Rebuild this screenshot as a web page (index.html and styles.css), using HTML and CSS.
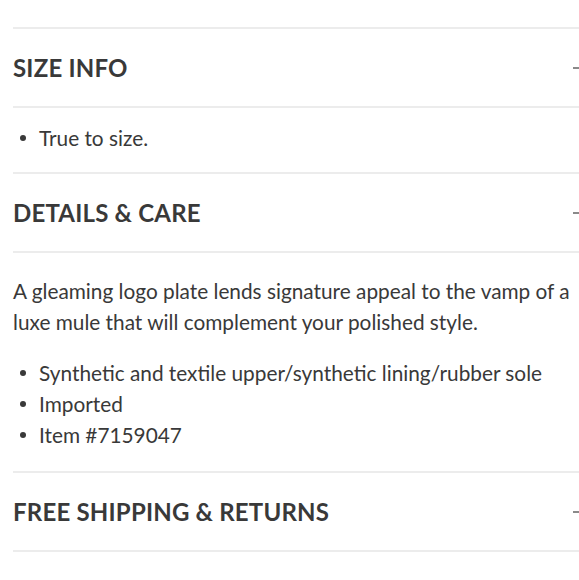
FILE: index.html
```html
<!DOCTYPE html>
<html lang="en">
<head>
<meta charset="utf-8">
<title>Product details</title>
<link rel="stylesheet" href="styles.css">
</head>
<body>
<div class="accordion">
  <section class="panel">
    <div class="panel-head">
      <h2 class="panel-title">SIZE INFO</h2>
      <span class="toggle"></span>
    </div>
    <div class="panel-body body-size">
      <ul class="bullets">
        <li>True to size.</li>
      </ul>
    </div>
  </section>
  <section class="panel">
    <div class="panel-head">
      <h2 class="panel-title">DETAILS &amp; CARE</h2>
      <span class="toggle"></span>
    </div>
    <div class="panel-body body-details">
      <p class="desc">A gleaming logo plate lends signature appeal to the vamp of a luxe mule that will complement your polished style.</p>
      <ul class="bullets">
        <li>Synthetic and textile upper/synthetic lining/rubber sole</li>
        <li>Imported</li>
        <li>Item #7159047</li>
      </ul>
    </div>
  </section>
  <section class="panel">
    <div class="panel-head">
      <h2 class="panel-title">FREE SHIPPING &amp; RETURNS</h2>
      <span class="toggle"></span>
    </div>
  </section>
</div>
</body>
</html>
```

FILE: styles.css
```css
html, body {
  margin: 0;
  padding: 0;
  background: #ffffff;
  overflow: hidden;
}

body {
  font-family: Lato, "Noto Sans", "Liberation Sans", sans-serif;
  color: #393939;
}

.accordion {
  width: 590px;
  margin-left: 13px;
  padding-top: 27px;
}

.panel {
  border-top: 2px solid #ececec;
}

.panel:last-child {
  border-bottom: 2px solid #ececec;
}

.panel-head {
  display: flex;
  align-items: center;
  justify-content: space-between;
  height: 77px;
}

.panel-title {
  margin: 0;
  font-size: 24px;
  font-weight: 700;
  letter-spacing: 0.2px;
  line-height: 30px;
  color: #393939;
}

.toggle {
  width: 10px;
  height: 2px;
  background: #8a8a8a;
  margin-right: 20px;
}

.panel-body {
  border-top: 2px solid #ececec;
  font-size: 20.8px;
  line-height: 31px;
  padding-right: 24px;
}

.body-size {
  padding-top: 14px;
  padding-bottom: 19px;
}

.body-details {
  padding-top: 22px;
  padding-bottom: 21px;
}

.desc {
  margin: 0 0 20px;
}

.bullets {
  list-style: none;
  margin: 0;
  padding: 0;
}

.bullets li {
  display: flex;
  align-items: center;
}

.bullets li::before {
  content: "";
  width: 6px;
  height: 6px;
  border-radius: 50%;
  background: #393939;
  margin-left: 7px;
  margin-right: 13px;
  flex: none;
}
```
